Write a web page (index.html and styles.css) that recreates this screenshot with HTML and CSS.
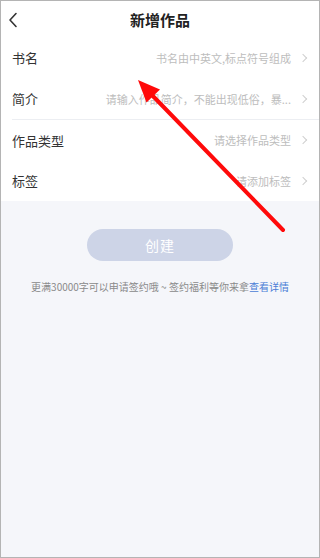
FILE: index.html
```html
<!DOCTYPE html>
<html lang="zh">
<head>
<meta charset="utf-8">
<link rel="stylesheet" href="styles.css">
</head>
<body>
<div class="page">
  <header class="topbar">
    <svg class="back" width="10" height="16" viewBox="0 0 10 16"><path d="M8 1.5 L2 8 L8 14.5" fill="none" stroke="#333" stroke-width="1.6" stroke-linecap="round" stroke-linejoin="round"/></svg>
    <h1 class="title">新增作品</h1>
  </header>
  <section class="form">
    <div class="row">
      <span class="label">书名</span>
      <span class="value">书名由中英文,标点符号组成</span>
      <span class="chev"></span>
    </div>
    <div class="row">
      <span class="label">简介</span>
      <span class="value">请输入作品简介，不能出现低俗，暴...</span>
      <span class="chev"></span>
    </div>
    <div class="row divided">
      <span class="label">作品类型</span>
      <span class="value">请选择作品类型</span>
      <span class="chev"></span>
    </div>
    <div class="row">
      <span class="label">标签</span>
      <span class="value">请添加标签</span>
      <span class="chev"></span>
    </div>
  </section>
  <div class="actions">
    <button class="create">创建</button>
    <p class="tip">更满30000字可以申请签约哦 ~ 签约福利等你来拿<span class="link">查看详情</span></p>
  </div>
  <svg class="arrow" width="320" height="558" viewBox="0 0 320 558">
    <line x1="283" y1="230" x2="150" y2="93" stroke="#ff0a0a" stroke-width="4" stroke-linecap="round"/>
    <polygon points="138,80 160,89.5 146.5,102.5" fill="#ff0a0a"/>
  </svg>
</div>
</body>
</html>
```
FILE: styles.css
```css
* { box-sizing: border-box; }
html, body { margin: 0; padding: 0; }
body {
  font-family: "Noto Sans CJK SC", "Noto Sans", sans-serif;
  background: #fff;
}
.page {
  position: relative;
  width: 320px;
  height: 558px;
  background: #f5f6fa;
  border: 1px solid #b4b4b4;
  overflow: hidden;
}
.topbar {
  height: 36px;
  background: #fff;
  display: flex;
  align-items: center;
  justify-content: center;
  position: relative;
}
.back {
  position: absolute;
  left: 7px;
  top: 11px;
}
.title {
  margin: 0;
  font-size: 15px;
  font-weight: 700;
  color: #222;
  line-height: 20px;
  padding-top: 1px;
}
.form {
  background: #fff;
}
.row {
  height: 41px;
  display: flex;
  align-items: center;
  padding: 0 10px 0 11px;
}
.row.divided {
  border-top: 1px solid #eceef2;
  margin-left: 11px;
  padding-left: 0;
}
.label {
  font-size: 13px;
  color: #333;
  flex: none;
}
.value {
  flex: 1;
  text-align: right;
  font-size: 11px;
  color: #bdbdbd;
  white-space: nowrap;
  margin-right: 9px;
}
.chev {
  width: 6px;
  height: 6px;
  border-top: 1px solid #cfcfcf;
  border-right: 1px solid #cfcfcf;
  transform: rotate(45deg);
  margin-right: 3px;
  flex: none;
}
.actions {
  display: flex;
  flex-direction: column;
  align-items: center;
  padding-top: 28px;
}
.create {
  width: 146px;
  height: 32px;
  border: none;
  border-radius: 16px;
  background: #cdd4e7;
  color: #fff;
  font-family: inherit;
  font-size: 14px;
  letter-spacing: 1px;
  padding: 0;
}
.tip {
  margin: 19px 0 0;
  font-size: 10px;
  line-height: 14px;
  color: #8a8a8a;
  white-space: nowrap;
}
.link {
  color: #4a7dd6;
}
.arrow {
  position: absolute;
  left: -1px;
  top: -1px;
  pointer-events: none;
}
```
